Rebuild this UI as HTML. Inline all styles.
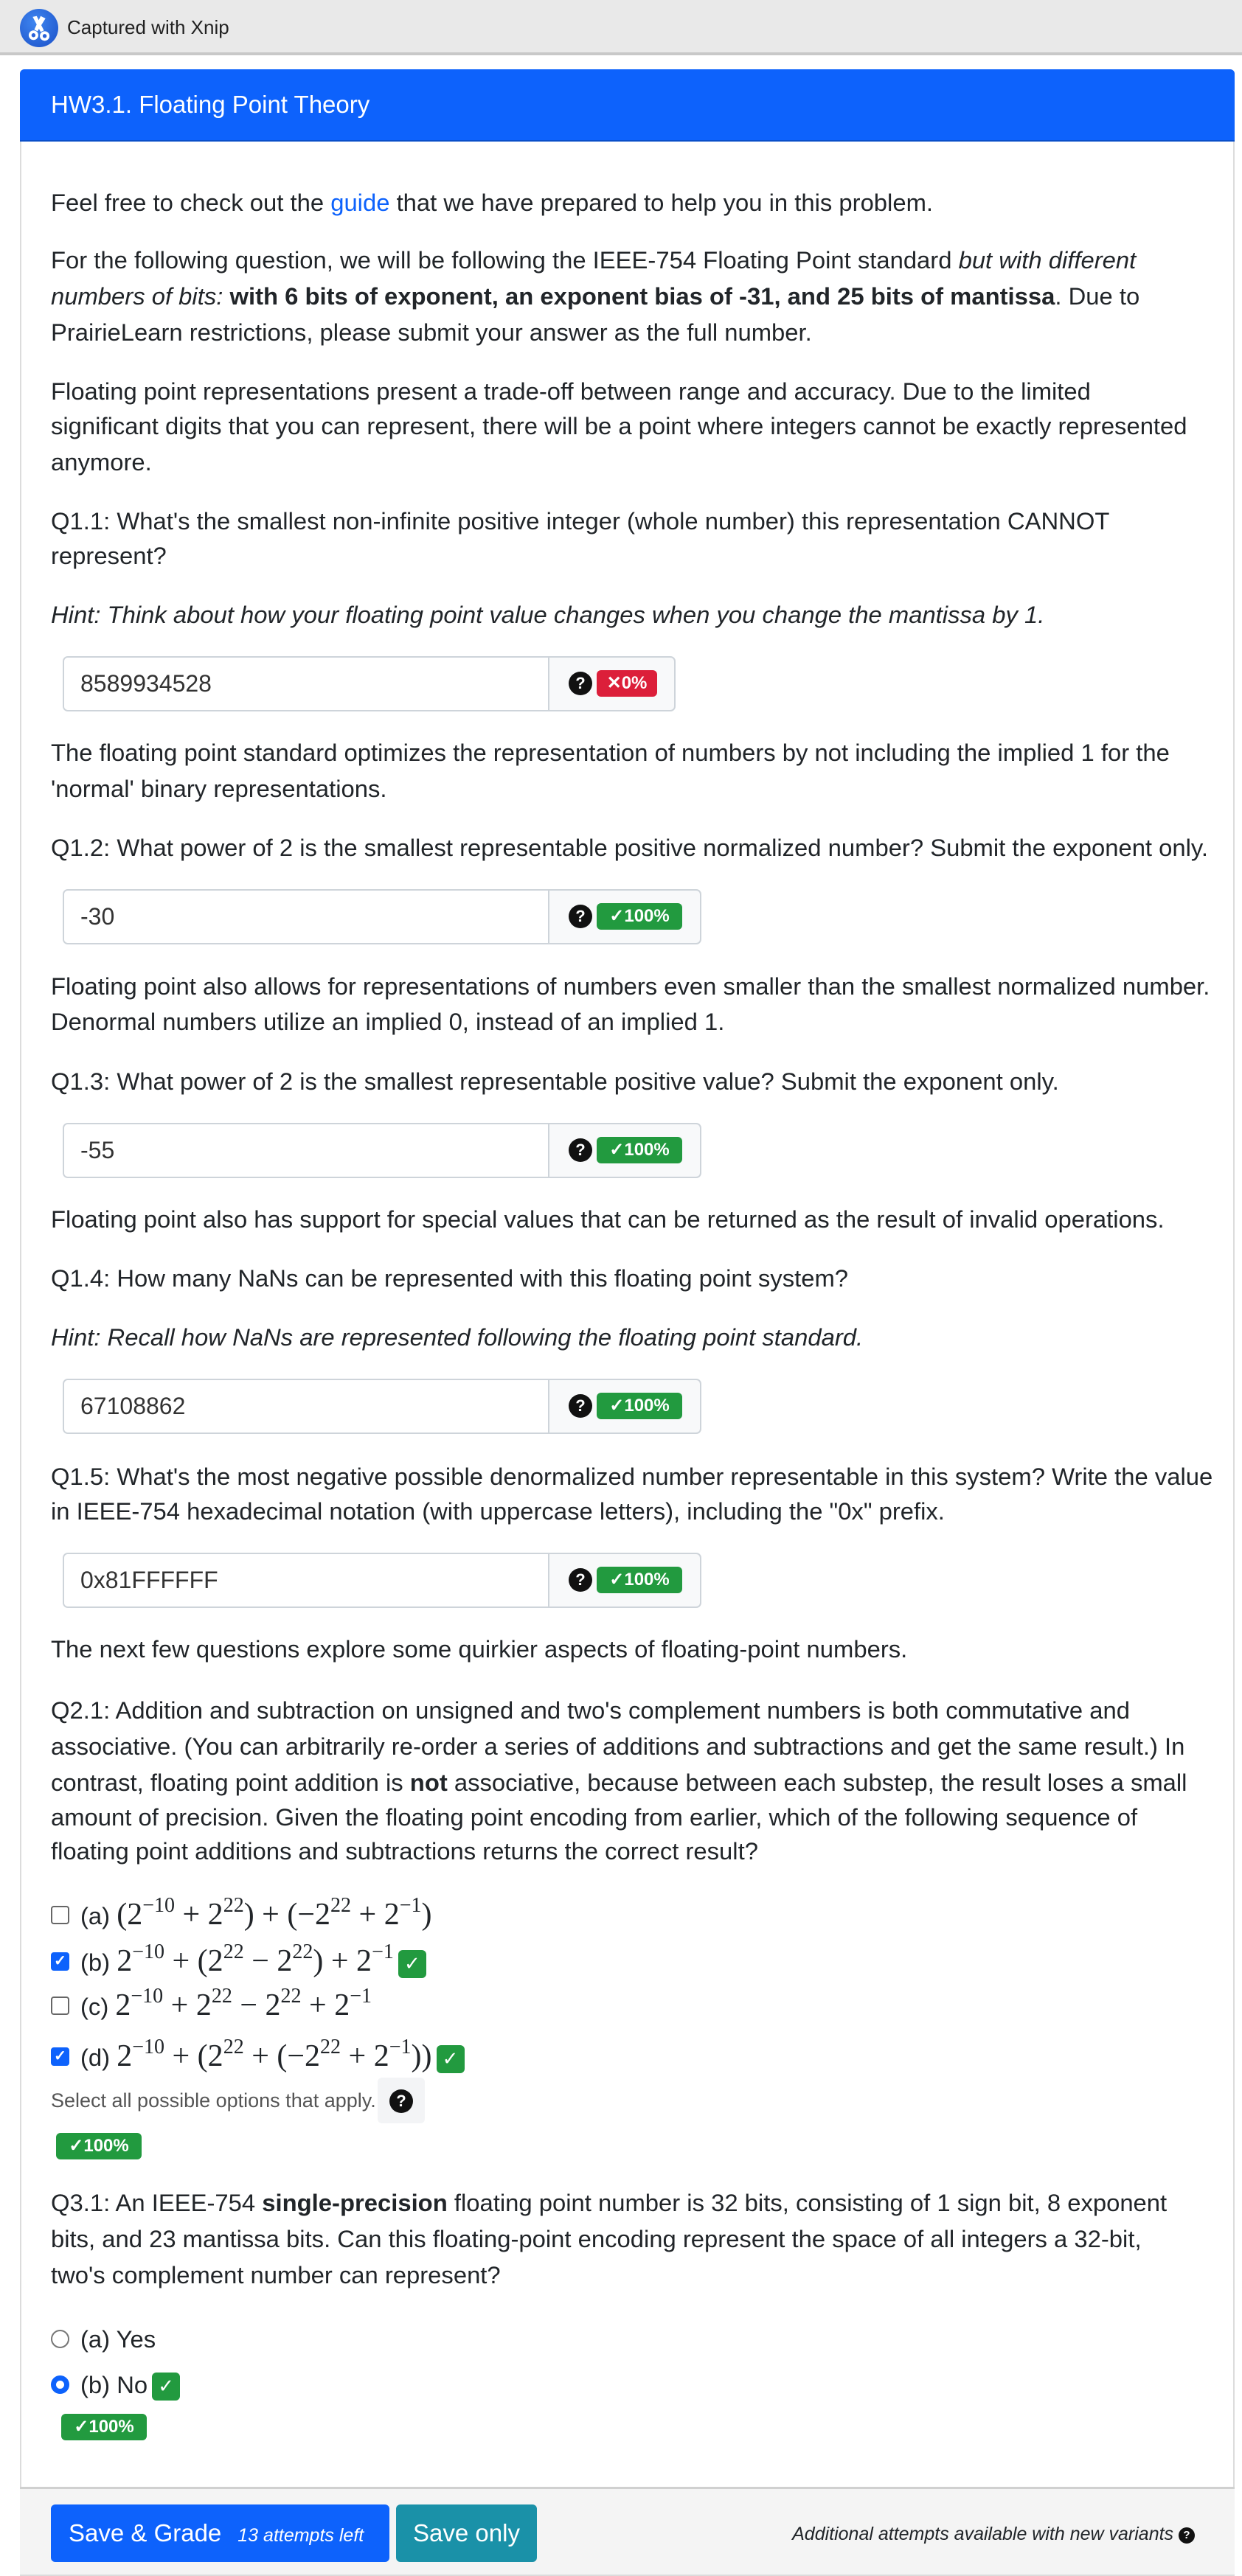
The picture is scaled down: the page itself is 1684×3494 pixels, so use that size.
<!DOCTYPE html>
<html><head><meta charset="utf-8"><style>
*{margin:0;padding:0;box-sizing:border-box}
body{width:1684px;height:3492px;position:relative;background:#fff;font-family:"Liberation Sans",sans-serif;color:#212529;overflow:hidden}
.top{position:absolute;left:0;top:0;width:1684px;height:75px;background:#e9e9e9;border-bottom:4px solid #c8c8c8}
.logo{position:absolute;left:27px;top:12px;width:52px;height:52px;border-radius:50%;background:radial-gradient(circle at 40% 35%,#3f86f0,#1a4fc7)}
.cap{position:absolute;left:91px;top:22px;font-size:26px;color:#222}
.card{position:absolute;left:27px;top:94px;width:1647px;height:3400px;border:2px solid #dcdcdc;border-radius:6px 6px 0 0}
.hdr{position:absolute;left:27px;top:94px;width:1647px;height:98px;background:#0d62fc;border-radius:6px 6px 0 0;border-bottom:2px solid #0a4fc9}
.hdr span{position:absolute;left:42px;top:29px;color:#fff;font-size:33px}
.l{position:absolute;left:69px;font-size:32.8px;line-height:49px;white-space:nowrap}
.i{font-style:italic}
.b{font-weight:bold}
a{color:#0d62fc;text-decoration:none}
.inp{position:absolute;left:85px;height:75px;border:2px solid #ced4da;border-radius:7px;background:#f8f9fa;overflow:hidden}
.inp .f{position:absolute;left:0;top:0;bottom:0;width:658px;background:#fff;border-right:2px solid #ced4da}
.inp .v{position:absolute;left:22px;top:17px;font-size:32px;color:#333}
.q{position:absolute;width:32px;height:32px;border-radius:50%;background:#111;color:#fff;font-size:22px;font-weight:bold;text-align:center;line-height:32px}
.bd{position:absolute;height:36px;border-radius:6px;color:#fff;font-weight:bold;font-size:24px;line-height:36px;text-align:center}
.red{background:#dc1f3a}.grn{background:#229a3f}
.m{font-family:"Liberation Serif",serif;font-size:42px}
.m sup{font-size:28px;vertical-align:17px;line-height:0}
.cb{position:absolute;left:69px;width:25px;height:25px;border:2px solid #666;border-radius:4px;background:#fff}
.cb.on{background:#0d62fc;border-color:#0d62fc;color:#fff;font-size:20px;text-align:center;line-height:21px;font-weight:bold}
.ck{display:inline-block;width:38px;height:38px;background:#229a3f;border-radius:6px;color:#fff;text-align:center;line-height:38px;font-size:26px;vertical-align:middle;margin-left:6px;font-family:"DejaVu Sans",sans-serif}
.foot{position:absolute;left:27px;top:3373px;width:1647px;height:119px;background:#f4f4f4;border-top:3px solid #d0d0d0}
.btn{position:absolute;top:3397px;height:78px;border-radius:6px;color:#fff;font-size:33px;line-height:78px}
</style></head><body>
<div class="top"><div class="logo"><svg width="52" height="52" viewBox="0 0 48 48"><g fill="#fff"><path d="M26 9 L32 12 L22 28 L18 26Z"/><path d="M16 10 L21 9 L30 27 L26 29Z"/><circle cx="17" cy="33" r="6"/><circle cx="31" cy="34" r="6"/></g><circle cx="17" cy="33" r="2.5" fill="#2a62d8"/><circle cx="31" cy="34" r="2.5" fill="#2a62d8"/></svg></div><div class="cap">Captured with Xnip</div></div>
<div class="card"></div>
<div class="hdr"><span>HW3.1. Floating Point Theory</span></div>

<div class="l" style="top:250px">Feel free to check out the <a>guide</a> that we have prepared to help you in this problem.</div>
<div class="l" style="top:328px">For the following question, we will be following the IEEE-754 Floating Point standard <span class="i">but with different</span></div>
<div class="l" style="top:377px"><span class="i">numbers of bits:</span> <span class="b">with 6 bits of exponent, an exponent bias of -31, and 25 bits of mantissa</span>. Due to</div>
<div class="l" style="top:426px">PrairieLearn restrictions, please submit your answer as the full number.</div>
<div class="l" style="top:506px">Floating point representations present a trade-off between range and accuracy. Due to the limited</div>
<div class="l" style="top:553px">significant digits that you can represent, there will be a point where integers cannot be exactly represented</div>
<div class="l" style="top:602px">anymore.</div>
<div class="l" style="top:682px">Q1.1: What's the smallest non-infinite positive integer (whole number) this representation CANNOT</div>
<div class="l" style="top:729px">represent?</div>
<div class="l i" style="top:809px">Hint: Think about how your floating point value changes when you change the mantissa by 1.</div>

<div class="inp" style="top:890px;width:831px"><div class="f"></div><div class="v">8589934528</div><div class="q" style="left:684px;top:19px">?</div><div class="bd red" style="left:722px;top:17px;width:82px">✕0%</div></div>

<div class="l" style="top:996px">The floating point standard optimizes the representation of numbers by not including the implied 1 for the</div>
<div class="l" style="top:1045px">'normal' binary representations.</div>
<div class="l" style="top:1125px">Q1.2: What power of 2 is the smallest representable positive normalized number? Submit the exponent only.</div>
<div class="inp" style="top:1206px;width:866px"><div class="f"></div><div class="v">-30</div><div class="q" style="left:684px;top:19px">?</div><div class="bd grn" style="left:722px;top:17px;width:116px">✓100%</div></div>

<div class="l" style="top:1313px">Floating point also allows for representations of numbers even smaller than the smallest normalized number.</div>
<div class="l" style="top:1361px">Denormal numbers utilize an implied 0, instead of an implied 1.</div>
<div class="l" style="top:1442px">Q1.3: What power of 2 is the smallest representable positive value? Submit the exponent only.</div>
<div class="inp" style="top:1523px;width:866px"><div class="f"></div><div class="v">-55</div><div class="q" style="left:684px;top:19px">?</div><div class="bd grn" style="left:722px;top:17px;width:116px">✓100%</div></div>

<div class="l" style="top:1629px">Floating point also has support for special values that can be returned as the result of invalid operations.</div>
<div class="l" style="top:1709px">Q1.4: How many NaNs can be represented with this floating point system?</div>
<div class="l i" style="top:1789px">Hint: Recall how NaNs are represented following the floating point standard.</div>
<div class="inp" style="top:1870px;width:866px"><div class="f"></div><div class="v">67108862</div><div class="q" style="left:684px;top:19px">?</div><div class="bd grn" style="left:722px;top:17px;width:116px">✓100%</div></div>

<div class="l" style="top:1978px">Q1.5: What's the most negative possible denormalized number representable in this system? Write the value</div>
<div class="l" style="top:2025px">in IEEE-754 hexadecimal notation (with uppercase letters), including the "0x" prefix.</div>
<div class="inp" style="top:2106px;width:866px"><div class="f"></div><div class="v">0x81FFFFFF</div><div class="q" style="left:684px;top:19px">?</div><div class="bd grn" style="left:722px;top:17px;width:116px">✓100%</div></div>

<div class="l" style="top:2212px">The next few questions explore some quirkier aspects of floating-point numbers.</div>
<div class="l" style="top:2295px">Q2.1: Addition and subtraction on unsigned and two's complement numbers is both commutative and</div>
<div class="l" style="top:2344px">associative. (You can arbitrarily re-order a series of additions and subtractions and get the same result.) In</div>
<div class="l" style="top:2393px">contrast, floating point addition is <span class="b">not</span> associative, because between each substep, the result loses a small</div>
<div class="l" style="top:2440px">amount of precision. Given the floating point encoding from earlier, which of the following sequence of</div>
<div class="l" style="top:2486px">floating point additions and subtractions returns the correct result?</div>

<div class="cb" style="top:2585px"></div>
<div class="l" style="left:109px;top:2573px">(a) <span class="m">(2<sup>−10</sup> + 2<sup>22</sup>) + (−2<sup>22</sup> + 2<sup>−1</sup>)</span></div>
<div class="cb on" style="top:2648px">✓</div>
<div class="l" style="left:109px;top:2636px">(b) <span class="m">2<sup>−10</sup> + (2<sup>22</sup> − 2<sup>22</sup>) + 2<sup>−1</sup></span><span class="ck">✓</span></div>
<div class="cb" style="top:2708px"></div>
<div class="l" style="left:109px;top:2696px">(c) <span class="m">2<sup>−10</sup> + 2<sup>22</sup> − 2<sup>22</sup> + 2<sup>−1</sup></span></div>
<div class="cb on" style="top:2777px">✓</div>
<div class="l" style="left:109px;top:2765px">(d) <span class="m">2<sup>−10</sup> + (2<sup>22</sup> + (−2<sup>22</sup> + 2<sup>−1</sup>))</span><span class="ck">✓</span></div>
<div class="l" style="top:2830px;font-size:27px;line-height:38px;color:#555">Select all possible options that apply.</div>
<div style="position:absolute;left:512px;top:2818px;width:64px;height:62px;background:#f3f4f6;border-radius:6px"></div>
<div class="q" style="left:528px;top:2834px">?</div>
<div class="bd grn" style="left:76px;top:2893px;width:116px">✓100%</div>

<div class="l" style="top:2963px">Q3.1: An IEEE-754 <span class="b">single-precision</span> floating point number is 32 bits, consisting of 1 sign bit, 8 exponent</div>
<div class="l" style="top:3012px">bits, and 23 mantissa bits. Can this floating-point encoding represent the space of all integers a 32-bit,</div>
<div class="l" style="top:3061px">two's complement number can represent?</div>
<div style="position:absolute;left:69px;top:3160px;width:25px;height:25px;border:2px solid #777;border-radius:50%"></div>
<div class="l" style="left:109px;top:3148px">(a) Yes</div>
<div style="position:absolute;left:69px;top:3222px;width:25px;height:25px;border:7px solid #0d62fc;border-radius:50%;background:#fff"></div>
<div class="l" style="left:109px;top:3210px">(b) No<span class="ck">✓</span></div>
<div class="bd grn" style="left:83px;top:3274px;width:116px">✓100%</div>

<div class="foot"></div>
<div class="btn" style="left:69px;width:459px;background:#0d62fc"><span style="margin-left:24px">Save &amp; Grade</span><span style="font-size:25px;font-style:italic;margin-left:22px">13 attempts left</span></div>
<div class="btn" style="left:537px;width:191px;background:#1a91a8;text-align:center">Save only</div>
<div style="position:absolute;right:64px;top:3420px;font-size:25px;font-style:italic;line-height:34px">Additional attempts available with new variants <span style="display:inline-block;width:22px;height:22px;border-radius:50%;background:#111;color:#fff;font-size:15px;font-style:normal;font-weight:bold;text-align:center;line-height:22px;vertical-align:2px">?</span></div>
</body></html>
